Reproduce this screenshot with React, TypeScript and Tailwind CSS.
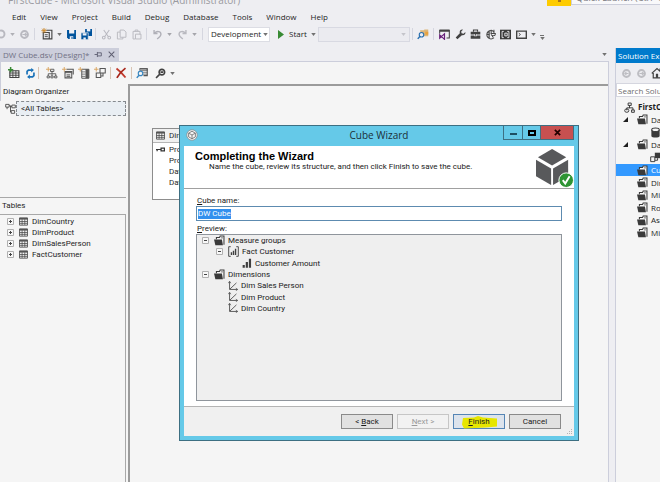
import type { ReactNode } from 'react'

type IconProps = { className?: string; children: ReactNode }

function Icon({ className = 'size-[11px]', children }: IconProps) {
  return (
    <svg viewBox="0 0 16 16" className={`block shrink-0 ${className}`} fill="none" aria-hidden="true">
      {children}
    </svg>
  )
}

function Caret({ className = 'text-[#717171]' }: { className?: string }) {
  return (
    <svg viewBox="0 0 6 4" className={`block h-[3px] w-[5px] shrink-0 ${className}`} aria-hidden="true">
      <path d="M0 0h6L3 4z" fill="currentColor" />
    </svg>
  )
}

function ToolButton({ label, className = 'w-4', children }: { label: string; className?: string; children: ReactNode }) {
  return (
    <button type="button" aria-label={label} className={`flex h-4 shrink-0 items-center justify-center ${className}`}>
      {children}
    </button>
  )
}

function Sep({ className = 'mx-[2px] bg-[#d5d6df]' }: { className?: string }) {
  return <span className={`h-3 w-px shrink-0 ${className}`} />
}

/* Shared glyphs */

function FolderIcon({ className }: { className?: string }) {
  return (
    <Icon className={className}>
      <path d="M3.500 6V3.500H8L9 1.500h5.500V14" stroke="#3a3a3a" strokeWidth="1.500" fill="#f6f6f6" />
      <path d="M0 6.500h11.500l1.500 8.500H2z" fill="#3a3a3a" />
      <path d="M10 4.200h3" stroke="#3a3a3a" />
    </Icon>
  )
}

function TableIcon({ className }: { className?: string }) {
  return (
    <Icon className={className}>
      <path d="M1 1.500h14v13H1z" fill="#f4f4f4" stroke="#454545" strokeWidth="1.500" />
      <path d="M1 2h14v2.500H1z" fill="#454545" />
      <path d="M1 8h14M1 11.300h14M5.500 4v10M10.300 4v10" stroke="#454545" strokeWidth="1.300" />
    </Icon>
  )
}

function DimensionIcon() {
  return (
    <Icon className="size-[10px]">
      <path d="M2.500 1v12.500H15M3 13 13.500 3" stroke="#4a4a4a" strokeWidth="1.400" />
      <path d="M.5 3.500 2.500.5l2 3M12.500 11.500l3 2-3 2" stroke="#4a4a4a" strokeWidth="1.200" />
    </Icon>
  )
}

function MeasureIcon() {
  return (
    <Icon className="size-[10px]">
      <path d="M1 11h3.500v4.500H1zM6 6.500h3.500v9H6zM11 1h3.500v14.500H11z" fill="#3f3f3f" />
    </Icon>
  )
}

function MeasureGroupIcon() {
  return (
    <Icon className="size-[11px]">
      <path d="M4 1H1v14h3M12 1h3v14h-3" stroke="#4a4a4a" strokeWidth="1.400" />
      <path d="M4 9h2v4H4zM7 7h2v6H7zM10 4h2v9h-2z" fill="#3f3f3f" />
    </Icon>
  )
}

function Expander({ open = false }: { open?: boolean }) {
  return (
    <svg viewBox="0 0 7 7" className="block size-[7px] shrink-0" aria-hidden="true">
      <path d="M.5.5h6v6h-6z" fill="#f8f8f8" stroke="#b0b0b0" />
      <path d={open ? 'M2 3.500h3' : 'M2 3.500h3M3.500 2v3'} stroke="#444" />
    </svg>
  )
}

/* Main window chrome */

const menus = ['Edit', 'View', 'Project', 'Build', 'Debug', 'Database', 'Tools', 'Window', 'Help']

function TitleBar() {
  return (
    <header className="flex h-2 items-end justify-between overflow-hidden">
      <div className="pl-2 text-[10px] leading-4 whitespace-nowrap text-[#9a9aa0]">
        FirstCube - Microsoft Visual Studio (Administrator)
      </div>
      <div className="flex h-2 items-start">
        <div className="flex h-[6px] w-6 items-start justify-center bg-[#fecb00]">
          <span className="h-[2px] w-[3px] bg-[#a8741a]" />
        </div>
        <div className="flex h-[5px] w-[89px] items-end overflow-hidden border-b border-l border-[#cccedb] bg-[#f8f8fa] pl-1 text-[9px] leading-3 whitespace-nowrap text-[#77777c]">
          Quick Launch (Ctrl+Q)
        </div>
      </div>
    </header>
  )
}

function MainToolbar() {
  return (
    <div className="flex h-[18px] items-center">
      <ToolButton label="Navigate backward" className="w-[6px]">
        <svg viewBox="0 0 6 12" className="h-3 w-[6px]" fill="none">
          <circle cx="1" cy="6" r="3.500" stroke="#b9b9c0" strokeWidth="1.900" />
        </svg>
      </ToolButton>
      <ToolButton label="Backward history" className="w-3"><Caret className="text-[#b0b0b6]" /></ToolButton>
      <ToolButton label="Navigate forward" className="w-3">
        <Icon>
          <circle cx="8" cy="8" r="5" stroke="#b9b9c0" strokeWidth="2.800" />
          <path d="M5 8h5M8.500 5.500 11 8l-2.500 2.500" stroke="#b9b9c0" strokeWidth="1.500" />
        </Icon>
      </ToolButton>
      <Sep className="mx-1 bg-[#d5d6df]" />
      <ToolButton label="New project">
        <Icon className="size-[12px]">
          <path d="M3 6h8v8.500H3zM7 3h7.500v11.500H11" stroke="#424242" strokeWidth="1.500" />
          <path d="M5 9h4M5 11.500h4" stroke="#424242" strokeWidth="1.200" />
          <path d="M4 0v7M.5 3.500h7M1.500 1l5 5M6.500 1l-5 5" stroke="#c8872b" strokeWidth="1.200" />
        </Icon>
      </ToolButton>
      <ToolButton label="New project options" className="w-2"><Caret /></ToolButton>
      <ToolButton label="Save">
        <Icon>
          <path d="M1.500 1.500h13v13h-11l-2-2z" fill="#00539c" />
          <path d="M4.500 1.500h7.500v5H4.500zM5.500 10.500h5v4h-5z" fill="#eef0f6" />
          <path d="M8 11.500h1.500v3H8z" fill="#00539c" />
        </Icon>
      </ToolButton>
      <ToolButton label="Save all" className="w-[14px]">
        <Icon>
          <path d="M6 0h10v10H7L6 9z" fill="#00539c" />
          <path d="M8.500 0h5v3.500h-5z" fill="#eef0f6" />
          <path d="M0 5.500h10.500v10H1.500L0 14z" fill="#00539c" stroke="#eeeef2" />
          <path d="M2.500 6h5.500v3.500H2.500zM3.500 12.500h3.500v3H3.500z" fill="#eef0f6" />
        </Icon>
      </ToolButton>
      <Sep />
      <ToolButton label="Cut">
        <Icon>
          <path d="M4 1.500 10.500 11M12 1.500 5.500 11" stroke="#b9b9c0" strokeWidth="1.500" />
          <circle cx="4" cy="12.500" r="2" stroke="#b9b9c0" strokeWidth="1.500" />
          <circle cx="12" cy="12.500" r="2" stroke="#b9b9c0" strokeWidth="1.500" />
        </Icon>
      </ToolButton>
      <ToolButton label="Copy" className="w-[14px]">
        <Icon>
          <path d="M6 1.500h5.500l3 3V12H6zM6 4.500H2v10h8V12" stroke="#b9b9c0" strokeWidth="1.400" />
        </Icon>
      </ToolButton>
      <ToolButton label="Paste">
        <Icon>
          <path d="M3 9V3.500h10V8M6 3.500v-2h4v2M6.500 7.500h8v7h-8zM3 9v5.500h3" stroke="#b9b9c0" strokeWidth="1.400" />
        </Icon>
      </ToolButton>
      <Sep />
      <ToolButton label="Undo">
        <Icon>
          <path d="M3 1.500v5h5M3.500 6C7 2.500 13 3 13 7.500c0 3-3 5-5.500 7" stroke="#b0b0b8" strokeWidth="2" />
        </Icon>
      </ToolButton>
      <ToolButton label="Undo history" className="w-2"><Caret className="text-[#a5a5ab]" /></ToolButton>
      <ToolButton label="Redo" className="w-[18px]">
        <Icon>
          <path d="M13 1.500v5H8M12.500 6C9 2.500 3 3 3 7.500c0 3 3 5 5.500 7" stroke="#b9b9c0" strokeWidth="2" />
        </Icon>
      </ToolButton>
      <ToolButton label="Redo history" className="w-[6px]"><Caret className="text-[#a5a5ab]" /></ToolButton>
      <Sep className="mx-[5px] bg-[#d5d6df]" />
      <div className="relative flex shrink-0 items-center">
        <select
          aria-label="Solution configuration"
          className="h-[15px] w-[62px] appearance-none border border-[#dcdde4] bg-white pl-[2px] text-[8px] leading-3 text-[#1e1e1e]"
        >
          <option>Development</option>
        </select>
        <span className="pointer-events-none absolute right-[2px]"><Caret /></span>
      </div>
      <button type="button" className="ml-2 flex h-4 w-10 shrink-0 items-center text-[#1e1e1e]">
        <svg viewBox="0 0 7 9" className="mr-1 h-[9px] w-[7px] shrink-0" aria-hidden="true">
          <path d="M0 0l6 4.500L0 9z" fill="#388a34" />
        </svg>
        <span className="mr-1">Start</span>
        <Caret />
      </button>
      <div className="relative flex shrink-0 items-center">
        <select
          aria-label="Debug target"
          disabled
          className="h-[15px] w-[92px] appearance-none border border-[#d8d9e2] bg-[#ebebf0] text-[8px]"
        />
        <span className="pointer-events-none absolute right-1"><Caret className="text-[#c4c4ca]" /></span>
      </div>
      <Sep />
      <ToolButton label="Find in files">
        <Icon className="size-[12px]">
          <path d="M4 3h5l1-1h5v9H6z" fill="#dcb67a" />
          <path d="M11 5h4v4h-4z" fill="#e9a13b" />
          <circle cx="6" cy="9" r="3" fill="#eeeef2" stroke="#2a70b0" strokeWidth="1.500" />
          <path d="m4 11-3 3.500" stroke="#2a70b0" strokeWidth="2" />
        </Icon>
      </ToolButton>
      <Sep />
      <ToolButton label="Start page">
        <Icon className="size-[11px]">
          <path d="M1 7V2h14v11h-4" stroke="#424242" strokeWidth="1.500" />
          <path d="M1 1h14v3H1z" fill="#424242" />
          <path d="m1 8.500 7 6.500V7l-7 6.500z" stroke="#68217a" strokeWidth="1.700" />
        </Icon>
      </ToolButton>
      <ToolButton label="Properties">
        <Icon>
          <path d="M15 4.500 12.500 7 9.500 6 9 3.500 11.500 1C8.500.2 6 3 7 6L1 12.500 3.500 15 10 9c3 1 6-1.500 5-4.500z" fill="#424242" />
        </Icon>
      </ToolButton>
      <ToolButton label="Toolbox" className="w-[14px]">
        <Icon>
          <path d="M5 4V1.500h6V4" stroke="#424242" strokeWidth="1.500" />
          <path d="M1 4h14v4H1zM1 9.500h14V14H1z" fill="#424242" />
          <path d="M6 7.500h4v3H6z" fill="#eeeef2" />
          <path d="M7 7.500h2v2H7z" fill="#424242" />
        </Icon>
      </ToolButton>
      <ToolButton label="Class view">
        <Icon>
          <path d="M13 4a6 6 0 1 0 0 8.500M6 2.500v11M2 8h5" stroke="#4a4a4a" strokeWidth="1.800" />
          <path d="M9 1v5M13 1v5M8 6.500h7v1c0 3-6 3-6 0M11 9v3" stroke="#4a4a4a" strokeWidth="1.500" />
        </Icon>
      </ToolButton>
      <ToolButton label="Extensions" className="w-[15px]">
        <Icon>
          <path d="M0 1h16v14H0z" fill="#3a3a3a" />
          <path d="M5.500 3.500H3v9h2.500M10.500 3.500H13v9h-2.500M7 6h3.500v4H7z" stroke="#eeeef2" strokeWidth="1.300" />
        </Icon>
      </ToolButton>
      <ToolButton label="Command window">
        <Icon>
          <path d="M1 3h14v10.500H1z" stroke="#424242" strokeWidth="2" />
          <path d="m4 6 2.500 2L4 10" stroke="#424242" strokeWidth="1.300" />
        </Icon>
      </ToolButton>
      <ToolButton label="Window list" className="w-2"><Caret /></ToolButton>
      <ToolButton label="Toolbar options" className="w-[10px] pt-[6px]">
        <span className="flex flex-col items-center gap-px">
          <span className="h-px w-1 bg-[#717171]" />
          <Caret />
        </span>
      </ToolButton>
    </div>
  )
}

/* Data source view designer */

function DocumentTab() {
  return (
    <div className="flex h-[14px] items-center justify-between border-b border-[#cccedb]">
      <div className="flex h-[14px] w-[119px] items-center bg-[#cccedb] pl-[3px] text-[#717184]">
        <a href="#design" className="w-[91px] whitespace-nowrap">DW Cube.dsv [Design]*</a>
        <button type="button" aria-label="Pin tab" className="mr-1">
          <Icon className="size-[9px]">
            <path d="M1 8h5M6 3.500v9M6 5h7v5.500H6" stroke="#5f5f72" strokeWidth="1.600" />
          </Icon>
        </button>
        <button type="button" aria-label="Close tab">
          <Icon className="size-[9px]">
            <path d="m3 3 10 10M13 3 3 13" stroke="#5f5f72" strokeWidth="1.800" />
          </Icon>
        </button>
      </div>
      <button type="button" aria-label="Open documents" className="pr-[2px]"><Caret /></button>
    </div>
  )
}

function DesignerToolbar() {
  return (
    <div className="flex h-[22px] items-center border-l border-[#cccedb] pl-[5px]">
      <ToolButton label="Add table">
        <Icon className="size-[12px]">
          <path d="M2.500 5h12v9h-12z" stroke="#424242" strokeWidth="1.500" />
          <path d="M2 8h13M2 11h13M6.500 5v9M10.500 5v9" stroke="#424242" strokeWidth="1.200" />
          <path d="M3.500 0v7M0 3.500h7" stroke="#388a34" strokeWidth="2" />
        </Icon>
      </ToolButton>
      <ToolButton label="Refresh">
        <Icon className="size-[11px]">
          <path d="M3 9.500V5l2-2h5M13 6.500V11l-2 2H6" stroke="#1871b8" strokeWidth="2.400" />
          <path d="m9 0 4 3-4 3.500zM7 9.500v6.500l-4-3z" fill="#1871b8" />
        </Icon>
      </ToolButton>
      <Sep className="mr-[5px] bg-[#d8c4b4]" />
      <ToolButton label="New diagram">
        <Icon className="size-[12px]">
          <path d="M8 5v4M3 12V9h10v3M8 9v3M6 3h4.500v3H6zM1.500 12h3v2.500h-3zM6.500 12h3v2.500h-3zM11.500 12h3v2.500h-3z" stroke="#565656" strokeWidth="1.200" />
          <path d="M3 0v6M0 3h6" stroke="#d8a25a" strokeWidth="1.200" />
        </Icon>
      </ToolButton>
      <ToolButton label="New named query">
        <Icon className="size-[12px]">
          <path d="M6 3h9v7M4 6h9v8.500H4z" stroke="#565656" strokeWidth="1.400" />
          <path d="M4 7.500h9M6 10.500h5M6 12.500h5" stroke="#565656" strokeWidth="1.300" />
          <path d="M3 0v6M0 3h6" stroke="#d8a25a" strokeWidth="1.200" />
        </Icon>
      </ToolButton>
      <ToolButton label="New calculation">
        <Icon className="size-[12px]">
          <path d="M5 3h9.500v12H5z" stroke="#565656" strokeWidth="1.300" />
          <path d="M10 3h4.500v12H10z" fill="#565656" />
          <path d="M5 6.500h5M5 9.500h5M5 12.500h5" stroke="#565656" />
          <path d="M3 0v6M0 3h6" stroke="#d8a25a" strokeWidth="1.200" />
        </Icon>
      </ToolButton>
      <ToolButton label="New relationship">
        <Icon className="size-[12px]">
          <path d="M8 2h7v6H8zM3 8h6v6H3zM9 12h3V8" stroke="#565656" strokeWidth="1.400" />
          <path d="M3 0v6M0 3h6" stroke="#d8a25a" strokeWidth="1.200" />
        </Icon>
      </ToolButton>
      <Sep className="mx-[2px] bg-[#d8c4b4]" />
      <ToolButton label="Delete">
        <Icon className="size-[12px]">
          <path d="M2 2c4 3 8 7 12 12" stroke="#c0392b" strokeWidth="2.400" />
          <path d="M14 1.500C9 5 5 10 2.500 14.500" stroke="#a8281c" strokeWidth="2.400" />
        </Icon>
      </ToolButton>
      <Sep className="mx-[2px] bg-[#d8c4b4]" />
      <ToolButton label="Find table">
        <Icon className="size-[12px]">
          <path d="M5 2.500h10v9h-5" stroke="#565656" strokeWidth="1.500" />
          <path d="M5 2h10v2.500H5zM9 7h6M9 9.500h6" stroke="#565656" />
          <circle cx="6" cy="8.500" r="3" fill="#f5f5f5" stroke="#3a87c0" strokeWidth="1.500" />
          <path d="m4 11-3 3.500" stroke="#3a87c0" strokeWidth="2" />
        </Icon>
      </ToolButton>
      <ToolButton label="Zoom" className="w-5">
        <Icon className="size-[11px]">
          <circle cx="10" cy="6" r="4" stroke="#424242" strokeWidth="2.400" />
          <path d="m7 9-5.500 5.500M8 6h4" stroke="#424242" strokeWidth="2.400" />
        </Icon>
      </ToolButton>
      <Caret />
    </div>
  )
}

const sourceTables = ['DimCountry', 'DimProduct', 'DimSalesPerson', 'FactCustomer']

function OrganizerPane() {
  return (
    <aside className="flex w-[130px] shrink-0 flex-col border-r-2 border-[#9b9b9b] font-[Roboto,sans-serif] text-[#1e1e1e]">
      <h2 className="h-[17px] border-l border-[#cccedb] pl-[2px] leading-4">Diagram Organizer</h2>
      <div className="mr-[2px] h-[97px] border-b border-[#a8a8a8]">
        <button type="button" className="flex h-[15px] w-full items-center pl-[5px] text-left">
          <Icon className="size-[11px]">
            <path d="M1 2h5v4H1zM10 3h5v4h-5zM9 11h5v4H9zM6 4h2v9h1M8 5h2M3 6v3" stroke="#4a4a4a" strokeWidth="1.300" />
          </Icon>
          <span className="h-[15px] flex-1 border border-dashed border-[#85898e] bg-[#e9eef3] pl-[4px] leading-[13px]">
            &lt;All Tables&gt;
          </span>
        </button>
      </div>
      <h2 className="h-4 pl-[2px] leading-4">Tables</h2>
      <ul className="mr-[2px] flex-1 border-t border-r border-[#a8a8a8] pt-px">
        {sourceTables.map((name) => (
          <li key={name} className="flex h-[11px] items-center pl-[7px]">
            <Expander />
            <TableIcon className="mr-1 ml-[5px] size-[9px]" />
            {name}
          </li>
        ))}
      </ul>
    </aside>
  )
}

function DiagramCanvas() {
  return (
    <div className="relative flex-1 overflow-hidden border-t-2 border-[#9b9b9b] font-[Roboto,sans-serif] text-[#2a2a2a]">
      <div className="absolute top-[42px] left-[22px] h-[72px] w-24 border border-[#8d8d8d] bg-white">
        <div className="flex h-[14px] items-center border-b border-[#b5b5b5] bg-[#f0f0f0] pl-[3px]">
          <TableIcon className="mr-1 size-[9px]" />
          DimProduct
        </div>
        <ul className="grid grid-cols-[16px_1fr] pt-px leading-[11px]">
          <li className="contents">
            <Icon className="mt-px ml-[3px] size-[9px]">
              <path d="M0 8h8M2 8v3M9 5.500h6v5H9z" stroke="#333" strokeWidth="2.200" />
            </Icon>
            <span>ProductKey</span>
          </li>
          <li className="col-start-2">ProductName</li>
          <li className="col-start-2">DateFrom</li>
          <li className="col-start-2">DateTo</li>
        </ul>
      </div>
    </div>
  )
}

/* Solution explorer */

type Kind = 'project' | 'folder' | 'source' | 'view'
type SolutionNode = { name: string; kind: Kind; open?: boolean; selected?: boolean }

const solution: SolutionNode[] = [
  { name: 'FirstCube', kind: 'project' },
  { name: 'Data Sources', kind: 'folder', open: true },
  { name: 'DW.ds', kind: 'source' },
  { name: 'Data Source Views', kind: 'folder', open: true },
  { name: 'DW Cube.dsv', kind: 'view' },
  { name: 'Cubes', kind: 'folder', selected: true },
  { name: 'Dimensions', kind: 'folder' },
  { name: 'Mining Structures', kind: 'folder' },
  { name: 'Roles', kind: 'folder' },
  { name: 'Assemblies', kind: 'folder' },
  { name: 'Miscellaneous', kind: 'folder' },
]

const indent: Record<Kind, string> = {
  project: 'pl-2',
  folder: 'pl-[7px]',
  source: 'pl-[34px]',
  view: 'pl-[34px]',
}

function NodeIcon({ kind }: { kind: Kind }) {
  if (kind === 'project') {
    return (
      <Icon className="mr-[3px] size-[11px]">
        <path d="M8 5v4M4 12V8.500h9V12M6 1.500h4.500V5H6zM11 11.500h4V15h-4z" stroke="#3a3a3a" strokeWidth="1.400" />
        <ellipse cx="4" cy="12.500" rx="3" ry="2.500" stroke="#3a3a3a" strokeWidth="1.400" />
      </Icon>
    )
  }
  if (kind === 'source') {
    return (
      <Icon>
        <path d="M2 4v9c0 3 12 3 12 0V4z" fill="#3a3a3a" />
        <ellipse cx="8" cy="4" rx="5.500" ry="2.500" fill="#f5f5f5" stroke="#3a3a3a" strokeWidth="1.500" />
      </Icon>
    )
  }
  if (kind === 'view') {
    return (
      <Icon>
        <path d="M1 7h6v7H1zM7 12h4V9" stroke="#3a3a3a" strokeWidth="1.400" />
        <path d="M7 1h8v8H7z" fill="#3a3a3a" />
      </Icon>
    )
  }
  return <FolderIcon className="mr-[3px] size-[11px]" />
}

function SolutionExplorer() {
  return (
    <aside className="flex w-[45px] shrink-0 flex-col overflow-hidden border-l border-[#cccedb] bg-[#f5f5f5] whitespace-nowrap text-[#1e1e1e]">
      <h2 className="h-[15px] shrink-0 bg-[#007acc] pl-[2px] leading-[15px] text-white">Solution Explorer</h2>
      <div className="flex h-[20px] shrink-0 items-center bg-[#eeeef2] pl-[3px]">
        <ToolButton label="Back" className="w-[15px]">
          <Icon>
            <circle cx="8" cy="8" r="5" stroke="#bdbdc2" strokeWidth="2.800" />
            <path d="M11 8H6M8 5.500 5.500 8 8 10.500" stroke="#bdbdc2" strokeWidth="1.500" />
          </Icon>
        </ToolButton>
        <ToolButton label="Forward" className="w-[15px]">
          <Icon>
            <circle cx="8" cy="8" r="5" stroke="#bdbdc2" strokeWidth="2.800" />
            <path d="M5 8h5M8.500 5.500 11 8l-2.500 2.500" stroke="#bdbdc2" strokeWidth="1.500" />
          </Icon>
        </ToolButton>
        <ToolButton label="Home">
          <Icon className="size-[12px]">
            <path d="M1 8.500 8 2l7 6.500M3 8v6.500h10V8M12 2v4" stroke="#424242" strokeWidth="1.600" />
            <path d="M6.500 9h3v5.500h-3z" fill="#424242" />
          </Icon>
        </ToolButton>
      </div>
      <input
        type="search"
        aria-label="Search Solution Explorer"
        placeholder="Search Solution Explorer"
        className="h-[14px] w-40 shrink-0 border border-[#d5d6df] bg-white pl-px placeholder:text-[#6d6d6d]"
      />
      <ul className="mt-1 flex h-[138px] shrink-0 flex-col">
        {solution.map((node) => (
          <li
            key={node.name}
            className={`flex flex-1 items-center ${indent[node.kind]} ${node.selected ? 'bg-[#3399ff] text-white' : ''}`}
          >
            {node.kind === 'folder' && (
              <svg viewBox="0 0 6 6" className="mr-[9px] size-[5px] shrink-0" aria-hidden="true">
                {node.open && <path d="M6 0v6H0z" fill="#1e1e1e" />}
              </svg>
            )}
            <NodeIcon kind={node.kind} />
            <span className={node.kind === 'project' ? 'font-bold' : ''}>{node.name}</span>
          </li>
        ))}
      </ul>
    </aside>
  )
}

/* Cube wizard */

function CubeLogo() {
  return (
    <svg viewBox="0 0 39 41" className="h-10 w-[38px] shrink-0" aria-hidden="true">
      <path d="M16.500 1 31 9.500 16.500 18 2 9.500z" fill="#58595b" />
      <path d="M0 12 15.500 21v17L0 29z" fill="#58595b" />
      <path d="M33 12 17.500 21v17L33 29z" fill="#58595b" />
      <circle cx="31" cy="33" r="7.500" fill="#2e9433" stroke="#fff" />
      <path d="m27.500 33 2.500 3.500 4.500-7.500" stroke="#fff" strokeWidth="2" fill="none" />
    </svg>
  )
}

function WizardTitleBar() {
  return (
    <div className="flex h-5 items-start justify-between">
      <Icon className="mt-[3px] ml-[2px] size-[12px]">
        <circle cx="8" cy="8" r="7" fill="#f4f4f4" stroke="#8a8a8a" />
        <path d="m8 3 4.500 2.500v5L8 13l-4.500-2.500v-5zM3.500 5.500 8 8l4.500-2.500M8 8v5" stroke="#777" strokeWidth="1.200" />
      </Icon>
      <h1 id="wizard-title" className="ml-[57px] flex-1 text-center font-[Open_Sans,sans-serif] text-[10px] leading-[19px] text-[#1c3038]">
        Cube Wizard
      </h1>
      <div className="flex h-[14px] border-x border-b border-[#3d6f82]">
        <button type="button" aria-label="Minimize" className="flex w-[19px] items-end justify-center border-r border-[#3d6f82] pb-1">
          <span className="h-[2px] w-[7px] bg-[#1d4f63]" />
        </button>
        <button type="button" aria-label="Maximize" className="flex w-[18px] items-center justify-center border-r border-[#3d6f82]">
          <span className="h-[6px] w-[8px] border-2 border-black" />
        </button>
        <button type="button" aria-label="Close" className="flex w-[32px] items-center justify-center bg-[#c75050]">
          <svg viewBox="0 0 8 8" className="size-[7px]" aria-hidden="true">
            <path d="m1 1 6 6M7 1 1 7" stroke="#200" strokeWidth="2" />
          </svg>
        </button>
      </div>
    </div>
  )
}

const preview = [
  { name: 'Measure groups', indent: 'pl-[5px]', expander: true, icon: <FolderIcon className="size-[11px]" /> },
  { name: 'Fact Customer', indent: 'pl-[19px]', expander: true, icon: <MeasureGroupIcon /> },
  { name: 'Customer Amount', indent: 'pl-[45px]', expander: false, icon: <MeasureIcon /> },
  { name: 'Dimensions', indent: 'pl-[5px]', expander: true, icon: <FolderIcon className="size-[11px]" /> },
  { name: 'Dim Sales Person', indent: 'pl-[31px]', expander: false, icon: <DimensionIcon /> },
  { name: 'Dim Product', indent: 'pl-[31px]', expander: false, icon: <DimensionIcon /> },
  { name: 'Dim Country', indent: 'pl-[31px]', expander: false, icon: <DimensionIcon /> },
]

function CubeWizard() {
  return (
    <section
      role="dialog"
      aria-labelledby="wizard-title"
      className="absolute top-[125px] left-[179px] flex w-[400px] flex-col border border-[#3d6f82] bg-[#65c9e8] px-1 pb-1 font-[Roboto,sans-serif] text-[#1a1a1a]"
    >
      <WizardTitleBar />
      <div className="flex h-[43px] items-start justify-between border-b border-[#a0a0a0] bg-white pt-[2px] pl-[11px]">
        <div className="pt-[2px]">
          <h2 className="font-[Liberation_Sans,sans-serif] text-[11px] leading-3 font-bold text-black">
            Completing the Wizard
          </h2>
          <p className="pl-[14px] leading-[10px]">
            Name the cube, review its structure, and then click Finish to save the cube.
          </p>
        </div>
        <CubeLogo />
      </div>
      <div className="flex flex-col bg-white px-3 pt-[6px] pb-[5px]">
        <label htmlFor="cube-name" className="h-[11px] pl-px leading-[11px]">
          <u>C</u>ube name:
        </label>
        <div className="relative flex h-[15px] items-center">
          <input
            id="cube-name"
            defaultValue="DW Cube"
            className="h-full w-full border border-[#5d8bb0] bg-white pl-px text-transparent"
          />
          <span className="pointer-events-none absolute left-[2px] bg-[#3390ee] leading-[10px] text-white">DW Cube</span>
        </div>
        <div id="preview-label" className="mt-[2px] h-[11px] pl-px leading-[11px]">
          <u>P</u>review:
        </div>
        <div className="h-[167px] border border-[#8f959c] bg-[#efefef]">
          <ul aria-labelledby="preview-label" className="flex h-[79px] flex-col leading-[11px]">
            {preview.map((row) => (
              <li key={row.name} className={`flex flex-1 items-center ${row.indent}`}>
                {row.expander && <span className="mr-[5px]"><Expander open /></span>}
                {row.icon}
                <span className="pl-[3px]">{row.name}</span>
              </li>
            ))}
          </ul>
        </div>
      </div>
      <div className="relative flex h-[30px] items-center justify-end gap-1 border-t border-[#b4b4b4] bg-[#f0f0f0] pr-[13px]">
        <button type="button" className="h-[15px] w-[52px] border border-[#8a8a8a] bg-[#e1e1e1]">
          &lt; <u>B</u>ack
        </button>
        <button type="button" disabled className="h-[15px] w-[52px] border border-[#c6c6c6] bg-[#f2f2f2] text-[#9a9a9a]">
          <u>N</u>ext &gt;
        </button>
        <button type="button" className="relative h-[15px] w-[52px] border border-[#5585b5] bg-[#dce3ec]">
          <svg viewBox="0 0 36 13" className="absolute top-px left-2 h-[13px] w-9" aria-hidden="true">
            <path d="M1 2 12 1.500l4-1.500 5 1.500 14 1v8l-11 1-22 1-2-4z" fill="#e6e600" />
          </svg>
          <span className="relative"><u>F</u>inish</span>
        </button>
        <button type="button" className="h-[15px] w-[52px] border border-[#8a8a8a] bg-[#e1e1e1]">
          Cancel
        </button>
        <svg viewBox="0 0 6 6" className="absolute right-px bottom-px size-[6px]" aria-hidden="true">
          <path d="M4 0h1v1H4zM2 2h1v1H2zM4 2h1v1H4zM0 4h1v1H0zM2 4h1v1H2zM4 4h1v1H4z" fill="#b4b4b4" />
        </svg>
      </div>
    </section>
  )
}

export default function App() {
  return (
    <div className="relative flex h-screen flex-col overflow-hidden bg-[#eeeef2] font-[Open_Sans,sans-serif] text-[8px] leading-3 text-[#1e1e1e]">
      <TitleBar />
      <nav className="flex h-[17px] items-center gap-[14px] pl-3">
        {menus.map((name) => (
          <button key={name} type="button">{name}</button>
        ))}
      </nav>
      <MainToolbar />
      <div className="flex min-h-0 flex-1 gap-[6px] pt-[5px]">
        <main className="flex min-w-0 flex-1 flex-col">
          <DocumentTab />
          <div className="flex min-h-0 flex-1 flex-col border-r border-[#cccedb] bg-[#f5f5f5]">
            <DesignerToolbar />
            <div className="flex min-h-0 flex-1">
              <OrganizerPane />
              <DiagramCanvas />
            </div>
          </div>
        </main>
        <SolutionExplorer />
      </div>
      <CubeWizard />
    </div>
  )
}
